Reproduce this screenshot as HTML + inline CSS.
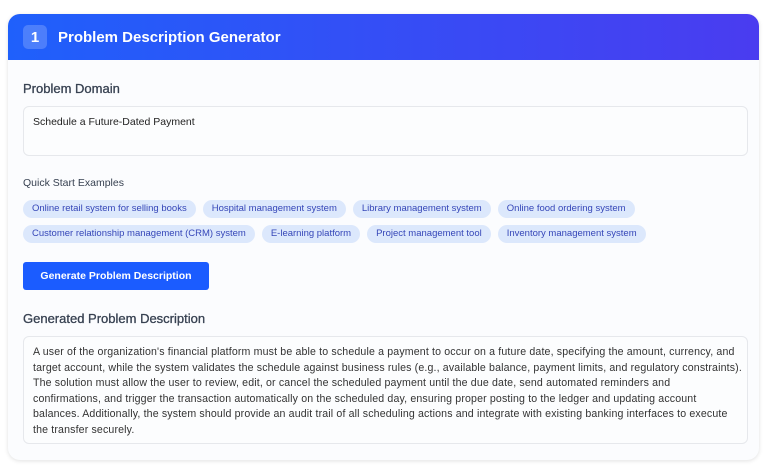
<!DOCTYPE html>
<html><head><meta charset="utf-8"><style>
*{margin:0;padding:0;box-sizing:border-box}
body{width:768px;height:473px;background:#fff;font-family:"Liberation Sans",sans-serif;position:relative;overflow:hidden}
.card{position:absolute;left:8px;top:14px;width:751px;height:446px;border-radius:12px;background:#fbfcfe;box-shadow:0 1px 4px rgba(0,0,0,.12);overflow:hidden}
.hdr{height:46px;background:linear-gradient(90deg,#1f60fb,#4a3cf0);display:flex;align-items:center;padding-left:15px}
.num{width:24px;height:24px;border-radius:5px;background:rgba(255,255,255,.2);color:#fff;font-weight:bold;font-size:15px;display:flex;align-items:center;justify-content:center}
.ttl{color:#fff;font-weight:bold;font-size:15px;margin-left:11px}
.lbl{position:absolute;left:15px;font-size:13px;color:#374151;-webkit-text-stroke:0.3px #374151}
.box{position:absolute;left:15px;width:725px;border:1px solid #e6e8ec;border-radius:6px;background:#fcfdfe;font-size:10.5px;color:#222}
.chips{position:absolute;left:15px;display:flex;gap:7px}
.chip{height:18px;border-radius:9px;background:#dce8fc;color:#3546b8;font-size:9.5px;padding:0 9px;line-height:18px;white-space:nowrap}
.btn{position:absolute;left:15px;top:248px;width:186px;height:28px;background:#1b5cff;border-radius:3px;color:#fff;font-weight:bold;font-size:10.5px;text-align:center;line-height:28px}
</style></head><body>
<div class="card">
<div class="hdr"><div class="num">1</div><div class="ttl">Problem Description Generator</div></div>
<div class="lbl" style="top:67px">Problem Domain</div>
<div class="box" style="top:92px;height:50px;padding:9px 9px">Schedule a Future-Dated Payment</div>
<div class="lbl" style="top:163px;font-size:10.5px;-webkit-text-stroke:0">Quick Start Examples</div>
<div class="chips" style="top:186px"><span class="chip">Online retail system for selling books</span><span class="chip">Hospital management system</span><span class="chip">Library management system</span><span class="chip">Online food ordering system</span></div>
<div class="chips" style="top:211px"><span class="chip">Customer relationship management (CRM) system</span><span class="chip">E-learning platform</span><span class="chip">Project management tool</span><span class="chip">Inventory management system</span></div>
<div class="btn">Generate Problem Description</div>
<div class="lbl" style="top:297px">Generated Problem Description</div>
<div class="box" style="top:322px;height:108px;padding:8px 9px;line-height:15.6px;color:#333;font-size:10.6px;letter-spacing:0.15px;white-space:nowrap;overflow:hidden">A user of the organization's financial platform must be able to schedule a payment to occur on a future date, specifying the amount, currency, and<br>target account, while the system validates the schedule against business rules (e.g., available balance, payment limits, and regulatory constraints).<br>The solution must allow the user to review, edit, or cancel the scheduled payment until the due date, send automated reminders and<br>confirmations, and trigger the transaction automatically on the scheduled day, ensuring proper posting to the ledger and updating account<br>balances. Additionally, the system should provide an audit trail of all scheduling actions and integrate with existing banking interfaces to execute<br>the transfer securely.</div>
</div>
</body></html>
